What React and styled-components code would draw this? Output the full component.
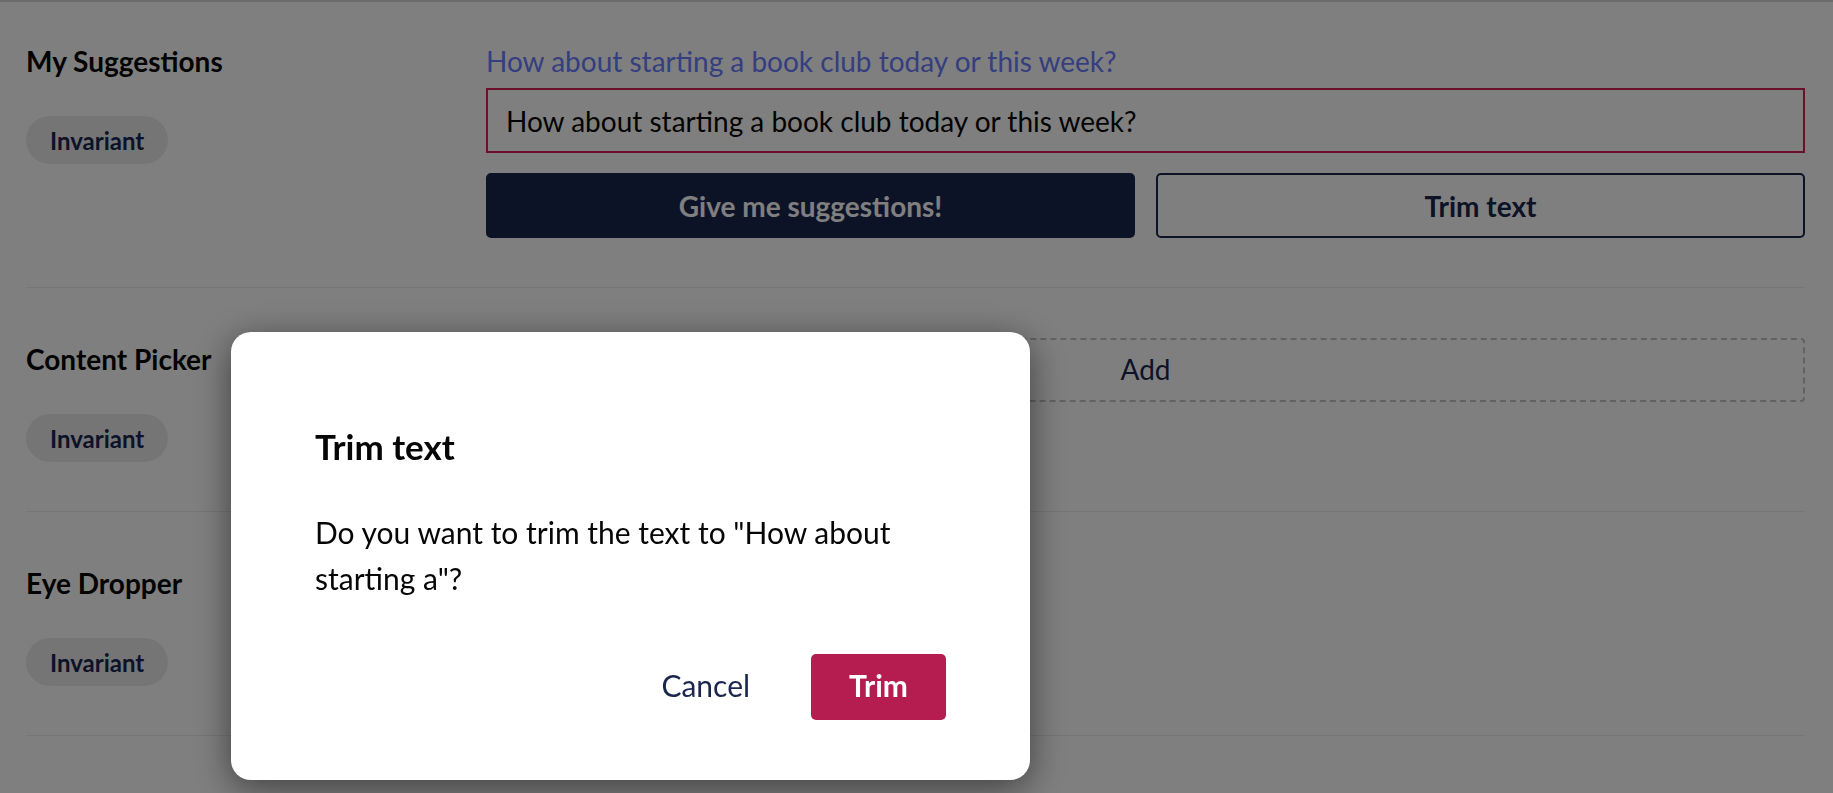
import React from "react";
import styled, { createGlobalStyle } from "styled-components";

const GlobalStyle = createGlobalStyle`
  html, body {
    margin: 0;
    padding: 0;
    background: #ffffff;
    font-family: Lato, "Noto Sans", sans-serif;
    color: #060606;
  }
  * { box-sizing: border-box; }
`;

const Page = styled.div`
  min-height: 793px;
  border-top: 2px solid #d6d6d8;
  padding: 0 28px 0 26px;
`;

const Section = styled.section`
  display: grid;
  grid-template-columns: 460px 1fr;
  align-items: start;
  padding: ${(p) => (p.$first ? "38px" : "50px")} 0 49px;
  border-bottom: 1px solid #ececee;
`;

const LabelCol = styled.div`
  display: flex;
  flex-direction: column;
  align-items: flex-start;
`;

const Label = styled.div`
  font-size: 28px;
  font-weight: 700;
  line-height: 42px;
  color: #060606;
`;

const Tag = styled.span`
  margin-top: 34px;
  height: 48px;
  padding: 0 24px;
  border-radius: 24px;
  background: #ebebeb;
  color: #1b264f;
  font-size: 24px;
  font-weight: 700;
  display: inline-flex;
  align-items: center;
`;

const Editor = styled.div`
  display: flex;
  flex-direction: column;
`;

const Suggestion = styled.a`
  font-size: 28px;
  line-height: 42px;
  color: #6a7cff;
  text-decoration: none;
  margin-bottom: 6px;
`;

const TextInput = styled.input`
  height: 65px;
  width: 100%;
  border: 2px solid #d42054;
  padding: 0 18px;
  font-family: inherit;
  font-size: 28px;
  color: #060606;
  background: #fff;
  outline: none;
`;

const ButtonRow = styled.div`
  display: grid;
  grid-template-columns: 1fr 1fr;
  gap: 21px;
  margin-top: 20px;
`;

const Button = styled.button`
  height: 65px;
  border-radius: 5px;
  font-family: inherit;
  font-size: 28px;
  font-weight: 700;
  cursor: pointer;
  border: 2px solid #1b264f;
  background: ${(p) => (p.$primary ? "#1b264f" : "#ffffff")};
  color: ${(p) => (p.$primary ? "#ffffff" : "#1b264f")};
`;

const AddBox = styled.button`
  height: 64px;
  width: 100%;
  border: 2px dashed #c4c4c4;
  border-radius: 4px;
  background: transparent;
  padding: 0 0 3px;
  font-family: inherit;
  font-size: 28px;
  color: #1b264f;
`;

const Backdrop = styled.div`
  position: fixed;
  inset: 0;
  background: rgba(0, 0, 0, 0.5);
`;

const Dialog = styled.div`
  position: fixed;
  left: 231px;
  top: 332px;
  width: 799px;
  height: 448px;
  background: #ffffff;
  border-radius: 20px;
  box-shadow: 0 8px 36px rgba(0, 0, 0, 0.5);
  padding: 93px 84px 60px;
  display: flex;
  flex-direction: column;
`;

const Title = styled.h2`
  margin: 0;
  font-size: 35px;
  font-weight: 700;
  line-height: 42px;
  color: #060606;
`;

const Body = styled.p`
  margin: 42px 0 0;
  font-size: 30px;
  line-height: 46px;
  color: #060606;
`;

const Actions = styled.div`
  margin-top: auto;
  display: flex;
  justify-content: flex-end;
  gap: 25px;
`;

const DialogButton = styled.button`
  height: 66px;
  padding: 0 ${(p) => (p.$danger ? "38px" : "36px")} 4px;
  border: none;
  border-radius: 5px;
  font-family: inherit;
  font-size: 30px;
  font-weight: ${(p) => (p.$danger ? 700 : 400)};
  background: ${(p) => (p.$danger ? "#b51c50" : "transparent")};
  color: ${(p) => (p.$danger ? "#ffffff" : "#1b264f")};
  cursor: pointer;
`;

const properties = [
  { name: "Content Picker", editor: <AddBox>Add</AddBox> },
  { name: "Eye Dropper", editor: null },
];

export default function App() {
  const text = "How about starting a book club today or this week?";
  return (
    <>
      <GlobalStyle />
      <Page>
        <Section $first>
          <LabelCol>
            <Label>My Suggestions</Label>
            <Tag>Invariant</Tag>
          </LabelCol>
          <Editor>
            <Suggestion href="#">{text}</Suggestion>
            <TextInput defaultValue={text} />
            <ButtonRow>
              <Button $primary>Give me suggestions!</Button>
              <Button>Trim text</Button>
            </ButtonRow>
          </Editor>
        </Section>
        {properties.map((p) => (
          <Section key={p.name}>
            <LabelCol>
              <Label>{p.name}</Label>
              <Tag>Invariant</Tag>
            </LabelCol>
            <Editor>{p.editor}</Editor>
          </Section>
        ))}
      </Page>
      <Backdrop />
      <Dialog role="dialog">
        <Title>Trim text</Title>
        <Body>Do you want to trim the text to "How about starting a"?</Body>
        <Actions>
          <DialogButton>Cancel</DialogButton>
          <DialogButton $danger>Trim</DialogButton>
        </Actions>
      </Dialog>
    </>
  );
}
